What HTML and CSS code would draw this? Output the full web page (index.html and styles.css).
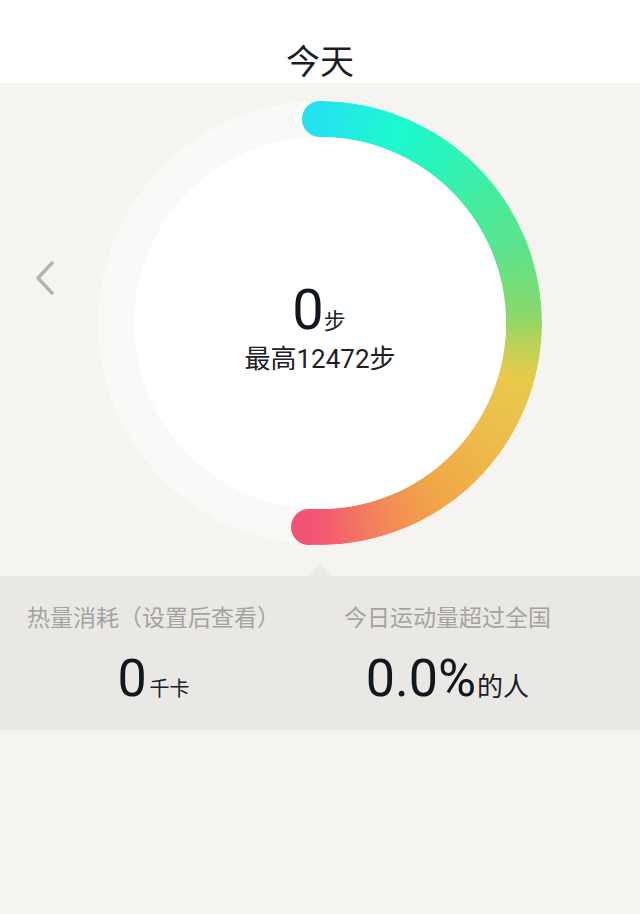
FILE: index.html
```html
<!DOCTYPE html>
<html lang="zh-CN">
<head>
<meta charset="utf-8">
<title>今天</title>
<link rel="stylesheet" href="styles.css">
</head>
<body>
<header class="top-bar">
  <h1 class="title">今天</h1>
</header>
<main class="page">
  <section class="ring-section">
    <button class="nav-prev" aria-label="前一天">
      <svg width="20" height="34" viewBox="0 0 20 34"><path d="M17 2 L3 17 L17 32" fill="none" stroke="#b4b3b1" stroke-width="3.4" stroke-linecap="round" stroke-linejoin="round"/></svg>
    </button>
    <div class="ring">
      <div class="ring-arc"></div>
      <span class="cap cap-start"></span>
      <span class="cap cap-end"></span>
      <div class="ring-inner">
        <div class="steps"><span class="steps-num">0</span><span class="steps-unit">步</span></div>
        <div class="best">最高12472步</div>
      </div>
    </div>
  </section>
  <section class="stats">
    <div class="stat">
      <div class="stat-label">热量消耗（设置后查看）</div>
      <div class="stat-value"><span class="num">0</span><span class="unit unit-kcal">千卡</span></div>
    </div>
    <div class="stat">
      <div class="stat-label">今日运动量超过全国</div>
      <div class="stat-value"><span class="num">0.0%</span><span class="unit unit-people">的人</span></div>
    </div>
  </section>
</main>
</body>
</html>
```

FILE: styles.css
```css
* { box-sizing: border-box; }
html, body { margin: 0; padding: 0; }
body {
  background: #f5f4f1;
  font-family: "Roboto", "Noto Sans CJK SC", sans-serif;
  color: #161b20;
  width: 640px;
  min-height: 914px;
}
.top-bar {
  background: #ffffff;
  height: 83px;
  display: flex;
  justify-content: center;
  padding-top: 36px;
}
.title {
  margin: 0;
  font-family: "Noto Sans CJK SC", sans-serif;
  font-weight: 400;
  font-size: 34px;
  line-height: 48px;
  height: 47px;
  color: #1a1d21;
}
.page { display: flex; flex-direction: column; }
.ring-section {
  position: relative;
  display: flex;
  justify-content: center;
  padding: 18px 0 31px;
}
.nav-prev {
  position: absolute;
  left: 33px;
  top: 177px;
  width: 24px;
  height: 36px;
  padding: 0;
  border: 0;
  background: none;
  display: flex;
  align-items: center;
  justify-content: center;
}
.ring {
  position: relative;
  width: 444px;
  height: 444px;
  border-radius: 50%;
  background: #f9f9f8;
  display: flex;
  align-items: center;
  justify-content: center;
}
.ring-arc {
  position: absolute;
  inset: 0;
  border-radius: 50%;
  background: conic-gradient(from 0deg,
    #24e3ef 0deg,
    #22e9e5 6deg,
    #1cf9cf 22deg,
    #2df3b8 38deg,
    #48eb9c 55deg,
    #5ee38a 70deg,
    #8bd86a 88deg,
    #c5d154 98deg,
    #e9c94a 106deg,
    #edbb4a 125deg,
    #f0a847 145deg,
    #f38c55 160deg,
    #f36e66 172deg,
    #f35b70 178deg,
    #f25574 183deg,
    transparent 183deg);
  -webkit-mask: radial-gradient(circle closest-side, transparent 185.5px, #000 186.5px);
  mask: radial-gradient(circle closest-side, transparent 185.5px, #000 186.5px);
}
.cap {
  position: absolute;
  width: 36px;
  height: 36px;
  border-radius: 50%;
}
.cap-start {
  left: 204px;
  top: 0;
  background: linear-gradient(to right, #26e0ef 0%, #24e3ef 50%, #23e6ea 100%);
}
.cap-end {
  left: 193px;
  top: 408px;
  background: linear-gradient(to right, #f25376 0%, #f25574 50%, #f35a71 100%);
}
.ring-inner {
  position: relative;
  width: 372px;
  height: 372px;
  border-radius: 50%;
  background: #ffffff;
  display: flex;
  flex-direction: column;
  align-items: center;
  justify-content: center;
  padding-top: 10px;
}
.steps {
  display: flex;
  align-items: baseline;
  line-height: 60px;
  height: 60px;
  margin-left: -2px;
}
.steps-num {
  font-family: "Roboto", sans-serif;
  font-size: 56px;
  color: #11171c;
}
.steps-unit {
  font-family: "Noto Sans CJK SC", sans-serif;
  font-size: 22px;
  margin-left: 0;
  color: #1d2227;
}
.best {
  font-size: 26px;
  line-height: 34px;
  margin-top: 2px;
  color: #1b2025;
}
.stats {
  position: relative;
  background: #e9e8e5;
  height: 154px;
  display: flex;
  gap: 64px;
  padding: 24px 0 21px 27px;
}
.stats::before {
  content: "";
  position: absolute;
  left: 308px;
  top: -12px;
  border-left: 12px solid transparent;
  border-right: 12px solid transparent;
  border-bottom: 12px solid #e9e8e5;
}
.stat {
  display: flex;
  flex-direction: column;
  align-items: center;
}
.stat-label {
  font-family: "Noto Sans CJK SC", sans-serif;
  font-size: 23px;
  line-height: 32px;
  color: #a5a4a1;
}
.stat-value {
  margin-top: 17px;
  line-height: 60px;
  height: 60px;
  display: flex;
  align-items: baseline;
}
.num {
  font-family: "Roboto", sans-serif;
  font-size: 52px;
  color: #11171c;
}
.unit {
  font-family: "Noto Sans CJK SC", sans-serif;
  color: #1b2025;
  margin-left: 3px;
}
.unit-kcal { font-size: 20px; }
.unit-people { font-size: 26px; margin-left: 1px; }
```
